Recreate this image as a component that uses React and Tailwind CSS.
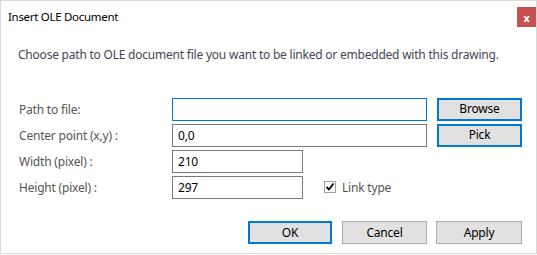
import React from 'react';

const font = { fontFamily: '"Noto Sans", "Open Sans", sans-serif' };

const Field = ({ value, focused, className }) => (
    <div
        className={`h-[23px] flex items-center px-[5px] text-[12px] text-black bg-white border ${
            focused ? 'border-[#0078d7]' : 'border-[#7a7a7a]'
        } ${className}`}
    >
        {value}
    </div>
);

const Button = ({ label, primary, className }) => (
    <button
        className={`h-[23px] flex items-center justify-center bg-[#e1e1e1] text-[12px] text-black ${
            primary ? 'border-2 border-[#0078d7]' : 'border border-[#adadad]'
        } ${className}`}
    >
        {label}
    </button>
);

const Label = ({ children }) => (
    <span className="w-[153px] shrink-0 text-[12px] text-[#555555] leading-[16px]">{children}</span>
);

export default function App() {
    return (
        <div
            className="w-[537px] h-[254px] border border-[#dadada] bg-white flex flex-col tracking-[-0.2px]"
            style={font}
        >
            <div className="h-[26px] flex items-start">
                <span className="mt-[8px] ml-[7px] text-[11.5px] tracking-[-0.3px] leading-[16px] text-black">
                    Insert OLE Document
                </span>
                <div className="ml-auto mt-[6px] w-[19px] h-[20px] bg-[#c75050] flex items-center justify-center text-white text-[11px] font-bold leading-none">
                    x
                </div>
            </div>

            <p className="mt-[20px] ml-[17px] text-[12px] tracking-[-0.22px] leading-[16px] text-[#464655]">
                Choose path to OLE document file you want to be linked or embedded with this drawing.
            </p>

            <div className="mt-[35px] ml-[18px] flex flex-col gap-[3px]">
                <div className="flex items-center h-[23px]">
                    <Label>Path to file:</Label>
                    <Field focused className="w-[255px]" />
                    <Button primary label="Browse" className="ml-[10px] w-[85px] -mt-[1px]" />
                </div>
                <div className="flex items-center h-[23px]">
                    <Label>Center point (x,y) :</Label>
                    <Field value="0,0" className="w-[255px]" />
                    <Button primary label="Pick" className="ml-[10px] w-[85px] -mt-[1px]" />
                </div>
                <div className="flex items-center h-[23px]">
                    <Label>Width (pixel) :</Label>
                    <Field value="210" className="w-[131px]" />
                </div>
                <div className="flex items-center h-[23px]">
                    <Label>Height (pixel) :</Label>
                    <Field value="297" className="w-[131px]" />
                    <div className="ml-[21px] w-[12px] h-[12px] border border-[#a0a0a0] bg-white flex items-center justify-center -mt-px">
                        <svg width="10" height="10" viewBox="0 0 10 10">
                            <path d="M1.5 5 L4 7.5 L8.5 1.5" fill="none" stroke="#000" strokeWidth="1.8" />
                        </svg>
                    </div>
                    <span className="ml-[6px] text-[12px] text-[#555555] leading-[16px]">Link type</span>
                </div>
            </div>

            <div className="mt-[22px] flex justify-end pr-[14px]">
                <Button primary label="OK" className="w-[84px]" />
                <Button label="Cancel" className="ml-[10px] w-[85px]" />
                <Button label="Apply" className="ml-[9px] w-[86px]" />
            </div>
        </div>
    );
}
